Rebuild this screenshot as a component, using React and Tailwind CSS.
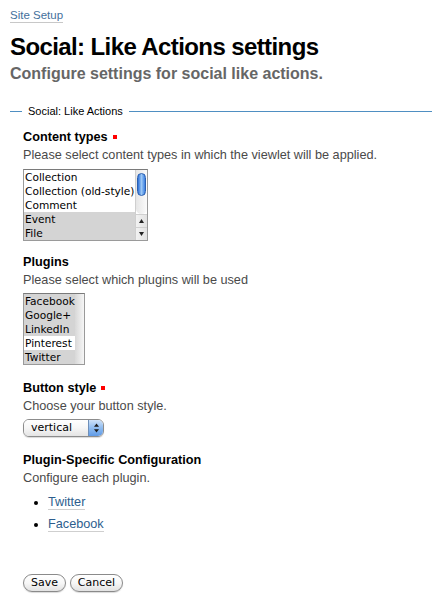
import React from 'react';

const sans = { fontFamily: '"Liberation Sans", Arial, sans-serif' };
const ui = { fontFamily: '"DejaVu Sans", "Lucida Grande", sans-serif' };

const contentTypes = [
  { name: 'Collection', selected: false },
  { name: 'Collection (old-style)', selected: false },
  { name: 'Comment', selected: false },
  { name: 'Event', selected: true },
  { name: 'File', selected: true },
];

const plugins = [
  { name: 'Facebook', selected: true },
  { name: 'Google+', selected: true },
  { name: 'LinkedIn', selected: true },
  { name: 'Pinterest', selected: false },
  { name: 'Twitter', selected: true },
];

function Required() {
  return <span className="inline-block w-[4px] h-[4px] bg-[#ff0000] ml-[5px] align-[2px]" />;
}

function Field({ label, required, help, className, children }) {
  return (
    <div className={className}>
      <div className="text-[12.7px] leading-[18px] font-bold text-black">
        {label}
        {required && <Required />}
      </div>
      <div className="text-[12.7px] leading-[19px] text-[#4a4a4a]">{help}</div>
      {children}
    </div>
  );
}

function ListRow({ item }) {
  return (
    <div
      className={`h-[14px] text-[10.6px] leading-[14px] whitespace-nowrap pl-[1px] text-black ${
        item.selected ? 'bg-[#d4d4d4]' : 'bg-white'
      }`}
      style={ui}
    >
      {item.name}
    </div>
  );
}

function ScrollArrow({ up }) {
  return (
    <div className="h-[13px] flex items-center justify-center bg-gradient-to-r from-[#f2f2f2] to-[#e2e2e2] border-t border-[#d0d0d0]">
      <svg width="5" height="4" viewBox="0 0 5 4">
        {up ? <path d="M2.5 0 L5 4 L0 4 Z" fill="#222" /> : <path d="M0 0 L5 0 L2.5 4 Z" fill="#222" />}
      </svg>
    </div>
  );
}

export default function App() {
  return (
    <div className="w-[432px] min-h-[612px] bg-white pl-[10px] pb-[20px]" style={sans}>
      <a className="inline-block mt-[8px] text-[11.5px] leading-[14px] text-[#44709c] border-b border-[#c8c8c8]">
        Site Setup
      </a>
      <h1 className="mt-[7px] text-[24px] leading-[28px] font-bold text-black tracking-[-0.6px]">
        Social: Like Actions settings
      </h1>
      <p className="mt-[3px] text-[16px] leading-[20px] font-bold text-[#666666]">
        Configure settings for social like actions.
      </p>

      <div className="mt-[20px] flex items-center h-[14px]">
        <div className="w-[12px] h-px bg-[#4f8fc2]" />
        <span className="px-[6px] text-[11px] leading-[14px] text-black">Social: Like Actions</span>
        <div className="flex-1 h-px bg-[#4f8fc2]" />
      </div>

      <div className="pl-[13px]">
        <Field
          className="mt-[10px]"
          label="Content types"
          required
          help="Please select content types in which the viewlet will be applied."
        >
          <div className="mt-[4px] flex w-[125px] h-[72px] border border-[#9a9a9a] border-t-[#7a7a7a] bg-white">
            <div className="flex-1 overflow-hidden">
              {contentTypes.map((item) => (
                <ListRow key={item.name} item={item} />
              ))}
            </div>
            <div className="w-[12px] flex flex-col border-l border-[#cfcfcf]">
              <div className="flex-1 bg-gradient-to-r from-[#e6e6e6] to-[#fbfbfb] rounded-b-[6px] px-[1px] pt-[3px]">
                <div className="h-[23px] w-[9px] mx-auto rounded-full bg-gradient-to-r from-[#2d6fd6] via-[#9cc8f5] to-[#3b7fe0] border border-[#2a5fb0]" />
              </div>
              <ScrollArrow up />
              <ScrollArrow />
            </div>
          </div>
        </Field>

        <Field className="mt-[12px]" label="Plugins" help="Please select which plugins will be used">
          <div className="mt-[3px] flex w-[62px] h-[72px] border border-[#9a9a9a] border-t-[#7a7a7a] bg-white">
            <div className="w-[51px]">
              {plugins.map((item) => (
                <ListRow key={item.name} item={item} />
              ))}
            </div>
            <div className="flex-1 bg-gradient-to-r from-[#d8d8d8] to-[#f6f6f6]" />
          </div>
        </Field>

        <Field className="mt-[14px]" label="Button style" required help="Choose your button style.">
          <div className="mt-[3px] flex w-[81px] h-[18px] rounded-[6px] border border-[#8c8c8c] overflow-hidden shadow-[0_1px_1px_rgba(0,0,0,0.15)]">
            <div
              className="flex-1 pl-[7px] text-[11px] leading-[16px] text-black bg-gradient-to-b from-white via-[#f6f6f6] to-[#e4e4e4]"
              style={ui}
            >
              vertical
            </div>
            <div className="w-[15px] flex items-center justify-center border-l border-[#6f8fb8] bg-gradient-to-b from-[#cfe2f8] via-[#8fbcf0] to-[#5f9ae6]">
              <svg width="5" height="10" viewBox="0 0 5 10">
                <path d="M2.5 0.5 L5 3.8 L0 3.8 Z" fill="#1b1b1b" />
                <path d="M0 6.2 L5 6.2 L2.5 9.5 Z" fill="#1b1b1b" />
              </svg>
            </div>
          </div>
        </Field>

        <Field className="mt-[14px]" label="Plugin-Specific Configuration" help="Configure each plugin.">
          <ul className="mt-[5px] pl-[25px] list-disc text-[12.7px] leading-[18px] marker:text-black">
            <li className="mb-[4px]">
              <a className="text-[#2d5e8e] border-b border-[#cfcfcf]">Twitter</a>
            </li>
            <li>
              <a className="text-[#2d5e8e] border-b border-[#cfcfcf]">Facebook</a>
            </li>
          </ul>
        </Field>

        <div className="mt-[41px] flex gap-[4px]" style={ui}>
          <button className="w-[43px] h-[18px] rounded-full border border-[#8a8a8a] bg-gradient-to-b from-white via-[#f7f7f7] to-[#e2e2e2] text-[11px] leading-[16px] text-black shadow-[0_1px_1px_rgba(0,0,0,0.15)]">
            Save
          </button>
          <button className="w-[53px] h-[18px] rounded-full border border-[#8a8a8a] bg-gradient-to-b from-white via-[#f7f7f7] to-[#e2e2e2] text-[11px] leading-[16px] text-black shadow-[0_1px_1px_rgba(0,0,0,0.15)]">
            Cancel
          </button>
        </div>
      </div>
    </div>
  );
}
